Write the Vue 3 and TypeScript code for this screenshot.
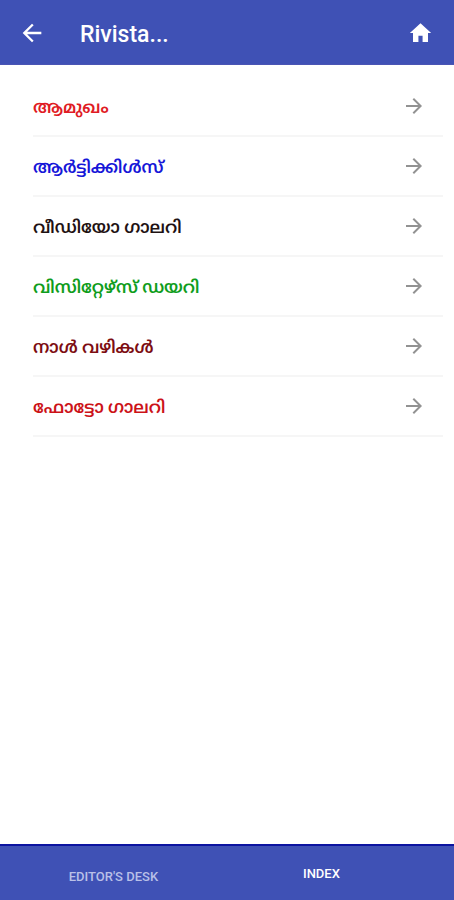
<script setup lang="ts">
import { ref } from 'vue'

interface Section {
  id: string
  title: string
  tone: string
}

const sections: Section[] = [
  { id: 'intro', title: 'ആമുഖം', tone: 'red' },
  { id: 'articles', title: 'ആർട്ടിക്കിൾസ്', tone: 'blue' },
  { id: 'videos', title: 'വീഡിയോ ഗാലറി', tone: 'black' },
  { id: 'visitors', title: 'വിസിറ്റേഴ്സ് ഡയറി', tone: 'green' },
  { id: 'timeline', title: 'നാൾ വഴികൾ', tone: 'maroon' },
  { id: 'photos', title: 'ഫോട്ടോ ഗാലറി', tone: 'crimson' },
]

const activeTab = ref<'desk' | 'index'>('index')
</script>

<template>
  <div class="page">
    <header class="toolbar">
      <button class="icon-button" type="button" aria-label="Back">
        <svg width="28" height="28" viewBox="0 0 24 24" aria-hidden="true">
          <path fill="currentColor" d="M20 11H7.83l5.59-5.59L12 4l-8 8 8 8 1.41-1.41L7.83 13H20v-2z" />
        </svg>
      </button>
      <h1 class="title">Rivista...</h1>
      <button class="icon-button" type="button" aria-label="Home">
        <svg width="25" height="25" viewBox="0 0 24 24" aria-hidden="true">
          <path fill="currentColor" d="M10 21v-6h4v6h5.200v-8.500h3L12 3.100 1.800 12.500h3v8.500z" />
        </svg>
      </button>
    </header>

    <main class="content">
      <ul class="list">
        <li v-for="section in sections" :key="section.id" class="item">
          <a class="row" :class="section.tone" :href="`#${section.id}`">
            <span class="label">{{ section.title }}</span>
            <svg class="arrow" width="24" height="24" viewBox="0 0 24 24" aria-hidden="true">
              <path fill="currentColor" d="M12 4l-1.41 1.41L16.17 11H4v2h12.17l-5.58 5.59L12 20l8-8z" />
            </svg>
          </a>
        </li>
      </ul>
    </main>

    <nav class="tabs">
      <button class="tab" :class="{ active: activeTab === 'desk' }" type="button" @click="activeTab = 'desk'">
        EDITOR'S DESK
      </button>
      <button class="tab" :class="{ active: activeTab === 'index' }" type="button" @click="activeTab = 'index'">
        INDEX
      </button>
    </nav>
  </div>
</template>

<style>
body {
  margin: 0;
  background: #fff;
}
</style>

<style scoped>
.page {
  display: flex;
  flex-direction: column;
  min-height: 100vh;
  background: #fff;
  font-family: Roboto, "Noto Sans", "Noto Sans Malayalam", sans-serif;
}

.toolbar {
  display: flex;
  align-items: center;
  box-sizing: border-box;
  height: 65px;
  padding: 1px 16px 0 14px;
  background: #3f51b5;
  border-bottom: 1px solid #4a55b4;
  color: #fff;
}

.icon-button {
  display: flex;
  align-items: center;
  justify-content: center;
  width: 36px;
  height: 36px;
  padding: 0;
  border: 0;
  background: none;
  color: #fff;
}

.title {
  flex: 1;
  margin: 0;
  padding: 4px 0 0 30px;
  font-size: 23px;
  line-height: 32px;
  font-weight: 500;
}

.content {
  flex: 1;
  padding: 12px 11px 0 33px;
}

.list {
  margin: 0;
  padding: 0;
  list-style: none;
}

.row {
  display: flex;
  align-items: center;
  justify-content: space-between;
  box-sizing: border-box;
  height: 60px;
  padding-right: 17px;
  border-bottom: 2px solid #f6f6f6;
  text-decoration: none;
}

.label {
  padding-top: 2px;
  font-size: 17px;
  line-height: 24px;
  font-weight: 600;
}

.arrow {
  color: #929292;
}

.red {
  color: #e01b24;
}

.blue {
  color: #1616d8;
}

.black {
  color: #1f1213;
}

.green {
  color: #0f9d1c;
}

.maroon {
  color: #7d0d12;
}

.crimson {
  color: #cc1218;
}

.tabs {
  display: grid;
  grid-template-columns: 6fr 5fr;
  box-sizing: border-box;
  height: 56px;
  padding-right: 38px;
  background: #3f51b5;
  border-top: 2px solid #0c14a0;
}

.tab {
  padding: 8px 0 0;
  border: 0;
  background: none;
  color: #b9c0e8;
  font-family: Roboto, sans-serif;
  font-size: 13px;
  line-height: 16px;
  font-weight: 500;
}

.tab.active {
  padding-top: 2px;
  color: #fff;
}
</style>
